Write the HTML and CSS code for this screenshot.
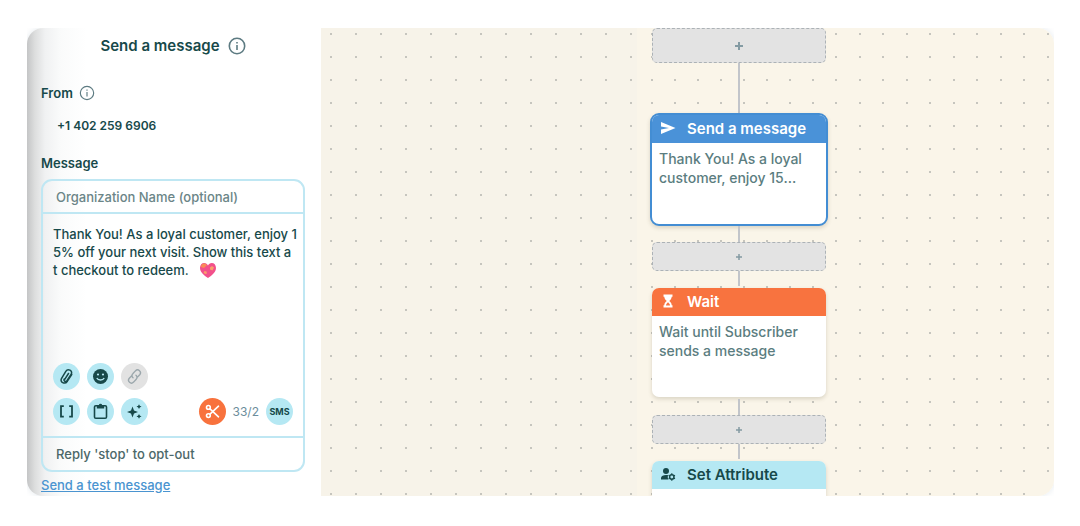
FILE: index.html
```html
<!DOCTYPE html>
<html lang="en">
<head>
  <meta charset="utf-8">
  <title>Send a message</title>
  <link rel="stylesheet" href="styles.css">
</head>
<body>
  <div class="builder">
    <!-- Message settings -->
    <form class="panel">
      <h1 class="panel-title">Send a message
        <svg class="info" width="18" height="18" viewBox="0 0 18 18"><circle cx="9" cy="9" r="7.7"/><path d="M9 8v5M9 5v1.6"/></svg>
      </h1>

      <label class="field-label" for="from">From
        <svg class="info light" width="16" height="16" viewBox="0 0 18 18"><circle cx="9" cy="9" r="7.5"/><path d="M9 8v5M9 5v1.6"/></svg>
      </label>
      <input class="from" type="text" id="from" value="+1 402 259 6906">

      <label class="field-label" for="message">Message</label>
      <div class="composer">
        <input class="org" type="text" placeholder="Organization Name (optional)" aria-label="Organization name">
        <div class="message-wrap">
          <textarea class="message" id="message" spellcheck="false">Thank You! As a loyal customer, enjoy 1
5% off your next visit. Show this text a
t checkout to redeem.</textarea>
          <svg class="heart" width="18" height="17" viewBox="0 0 18 17">
            <path fill="#f2508b" d="M9 16C5 13.4 1 10 1 5.900 1 3 2.900 1 5.200 1 7 1 8.300 2 9 3.500 9.700 2 11 1 12.800 1 15.100 1 17 3 17 5.900 17 10 13 13.400 9 16z"/>
            <path fill="#f98b57" d="M3.500 2c1.500-1 3.500-.5 4.500 1L5 6 2 5c0-1.500.5-2.400 1.500-3z"/>
            <path fill="#f9a06a" d="M11 5.500l2-1.500 2 1.500-1.500 3-2.500-1zM5.500 9l2 .5.5 2-2 .5-1.500-1.500z"/>
          </svg>
        </div>
        <div class="tools">
          <div class="tool-row">
            <button type="button" class="tool" aria-label="Attach file">
              <svg width="17" height="17" viewBox="0 0 17 17" fill="none" stroke="#17494a" stroke-width="1.500" stroke-linecap="round"><path d="M10.500 5.500L6.700 11.300M13.700 6.500l-4.300 6.700c-2.600 3.700-8 1-5.800-2.900L7.800 3.300c1.900-3.100 7.300-1 5.400 2.900l-4.100 6.300c-1.300 1.900-4 .5-2.900-1.500"/></svg>
            </button>
            <button type="button" class="tool" aria-label="Insert emoji">
              <svg width="17" height="17" viewBox="0 0 17 17"><circle cx="8.500" cy="8.500" r="7.500" fill="#17494a"/><circle cx="6" cy="6.500" r="1.100" fill="#b5e8f3"/><circle cx="11" cy="6.500" r="1.100" fill="#b5e8f3"/><path d="M4.800 10c1.400 2.700 6 2.700 7.400 0" fill="none" stroke="#b5e8f3" stroke-width="1.400"/></svg>
            </button>
            <button type="button" class="tool off" aria-label="Insert link" disabled>
              <svg width="17" height="17" viewBox="0 0 17 17" fill="none" stroke="#9ba7ac" stroke-width="1.400" stroke-linecap="round"><path d="M7 9.800c-1.500-1.200-1.300-3 0-4.300l2.400-2.600c2.700-2.700 6.700.8 4.300 3.800l-2 2.200M10 7.200c1.500 1.200 1.300 3 0 4.300l-2.400 2.600c-2.700 2.700-6.700-.8-4.300-3.800l2-2.200"/></svg>
            </button>
          </div>
          <div class="tool-row">
            <button type="button" class="tool" aria-label="Insert field">
              <svg width="17" height="17" viewBox="0 0 17 17" fill="none" stroke="#17494a" stroke-width="1.800"><path d="M5.800 3.200H3v10.400h2.800M11.200 3.200H14v10.400h-2.800"/></svg>
            </button>
            <button type="button" class="tool" aria-label="Templates">
              <svg width="17" height="17" viewBox="0 0 17 17"><rect x="2.500" y="2.700" width="12" height="12.500" rx="1.300" fill="none" stroke="#17494a" stroke-width="1.600"/><path fill="#17494a" d="M4.800 2h2a1.800 1.800 0 0 1 3.400 0h2v3.500H4.800z"/></svg>
            </button>
            <button type="button" class="tool" aria-label="Generate text">
              <svg width="17" height="17" viewBox="0 0 17 17" fill="#17494a"><path d="M6.500 3.500L8 7.400l4 1.500-4 1.500-1.500 4L5 10.400 1 8.900l4-1.500zM13 1.200l.8 1.600 1.700.8-1.700.8L13 6l-.8-1.600-1.700-.8 1.700-.8zM13 11l.8 1.600 1.700.8-1.700.8-.8 1.600-.8-1.600-1.700-.8 1.700-.8z"/></svg>
            </button>
            <button type="button" class="tool shorten" aria-label="Shorten">
              <svg width="17" height="17" viewBox="0 0 17 17" fill="none" stroke="#fff" stroke-width="1.600" stroke-linecap="round"><circle cx="4.400" cy="4.400" r="1.900"/><circle cx="4.400" cy="12.600" r="1.900"/><path d="M6 5.800l8.500 8M6 11.200l8.500-8"/></svg>
            </button>
            <span class="count">33/2</span>
            <button type="button" class="tool sms">SMS</button>
          </div>
        </div>
        <div class="opt-out">Reply 'stop' to opt-out</div>
      </div>
      <a class="test-link" href="#">Send a test message</a>
    </form>

    <!-- Automation flow -->
    <div class="canvas">
      <div class="grid-left"></div>
      <div class="flow">
        <button class="add tall" aria-label="Add step"><svg width="8" height="8" viewBox="0 0 8 8"><path d="M4 0v8M0 4h8"/></svg></button>
        <div class="line long"></div>
        <div class="node selected">
          <h2 class="node-head blue">
            <svg width="16" height="14" viewBox="0 0 16 14"><path fill="#fff" d="M1 1l14.500 6L1 13V8.600L9 7 1 5.400z"/></svg>
            Send a message
          </h2>
          <p class="node-body">Thank You! As a loyal customer, enjoy 15...</p>
        </div>
        <div class="line"></div>
        <button class="add" aria-label="Add step"><svg width="6" height="6" viewBox="0 0 8 8"><path d="M4 0v8M0 4h8"/></svg></button>
        <div class="line gap-below"></div>
        <div class="node">
          <h2 class="node-head orange">
            <svg width="16" height="14" viewBox="0 0 16 14"><path fill="#fff" fill-rule="evenodd" d="M3.500.5h9v2.300h-.8c0 2-1.300 3.200-2.500 4.200 1.200 1 2.500 2.200 2.500 4.200h.8v2.300h-9v-2.300h.8C4.300 9.200 5.600 8 6.800 7 5.600 6 4.300 4.800 4.300 2.800h-.8zM6 11.500h4C10 10 9 9 8 8.200 7 9 6 10 6 11.500z"/></svg>
            Wait
          </h2>
          <p class="node-body">Wait until Subscriber sends a message</p>
        </div>
        <div class="line gap-above"></div>
        <button class="add" aria-label="Add step"><svg width="6" height="6" viewBox="0 0 8 8"><path d="M4 0v8M0 4h8"/></svg></button>
        <div class="line gap-below"></div>
        <div class="node last">
          <h2 class="node-head cyan">
            <svg width="16" height="14" viewBox="0 0 16 14"><g fill="#17494a"><circle cx="6" cy="4" r="3"/><path d="M1 12.500V11c0-2 2.500-3 5-3 .8 0 1.500.1 2.200.3-.7 1.300-.6 2.900.3 4.200z"/></g><circle cx="11.800" cy="10" r="2.200" fill="none" stroke="#17494a" stroke-width="1.500"/><path stroke="#17494a" stroke-width="1.200" d="M11.800 6.300v1.200M11.800 12.500v1.200M8.600 8.200l1 .5M14 11.300l1 .5M15 8.200l-1 .5M9.600 11.300l-1 .5"/></svg>
            Set Attribute
          </h2>
        </div>
      </div>
      <div class="grid-right"></div>
    </div>
  </div>
</body>
</html>
```
FILE: styles.css
```css
body {
  margin: 28px 26px 30px 27px;
  background: #fff;
  color: #17494a;
  font-family: Inter, "Liberation Sans", sans-serif;
}
h1, h2, p {
  margin: 0;
}
button {
  padding: 0;
  border: none;
  font-family: inherit;
  cursor: pointer;
}
input, textarea {
  display: block;
  box-sizing: border-box;
  width: 100%;
  border: none;
  outline: none;
  background: none;
  color: inherit;
  font-family: inherit;
}
.builder {
  display: flex;
  border-radius: 16px;
  overflow: hidden;
  box-shadow: 0 0 6px rgba(120, 150, 170, 0.2);
}

/* Panel */
.panel {
  box-sizing: border-box;
  flex: 0 0 294px;
  padding: 8px 16px 0 14px;
  background: linear-gradient(to right, #c4c5c6, #dddede 8px, #f0f1f2 18px, #fafbfb 34px, #fff 60px);
}
.panel-title {
  display: flex;
  align-items: center;
  justify-content: center;
  gap: 8px;
  height: 20px;
  margin-bottom: 28px;
  font-size: 15px;
  font-weight: 600;
  line-height: 18px;
}
.info {
  fill: none;
  stroke: #5d7b82;
  stroke-width: 1.6;
}
.info.light {
  stroke-width: 1.3;
}
.field-label {
  display: flex;
  align-items: center;
  gap: 6px;
  height: 18px;
  font-size: 13px;
  font-weight: 600;
}
.from {
  height: 18px;
  margin: 14px 0 20px;
  padding: 0 16px;
  font-size: 12px;
  font-weight: 600;
}
.composer {
  margin-top: 7px;
  border: 2px solid #bfe7f3;
  border-radius: 11px;
}
.org {
  height: 33px;
  padding: 0 13px;
  border-bottom: 2px solid #bfe7f3;
  font-size: 13px;
  font-weight: 500;
}
.org::placeholder {
  color: #6b8587;
  opacity: 1;
}
.message-wrap {
  position: relative;
}
.message {
  height: 149px;
  padding: 11px 0 0 10px;
  resize: none;
  overflow: hidden;
  white-space: pre;
  font-size: 13px;
  font-weight: 500;
  line-height: 18px;
}
.heart {
  position: absolute;
  left: 156px;
  top: 48px;
}
.tools {
  display: grid;
  gap: 8px;
  padding: 0 10px 11px;
}
.tool-row {
  display: flex;
  align-items: center;
  gap: 7px;
}
.tool {
  display: flex;
  align-items: center;
  justify-content: center;
  width: 27px;
  height: 27px;
  border-radius: 50%;
  background: #b5e8f3;
  color: #17494a;
}
.tool.off {
  background: #e2e2e2;
}
.tool.shorten {
  margin-left: auto;
  background: #f8723d;
}
.tool.sms {
  font-size: 9px;
  font-weight: 700;
}
.count {
  color: #6c8d9b;
  font-size: 12px;
}
.opt-out {
  padding: 0 13px;
  border-top: 2px solid #bfe7f3;
  color: #4c6869;
  font-size: 13px;
  font-weight: 500;
  line-height: 32px;
}
.test-link {
  display: block;
  margin-top: 4px;
  color: #4a94d0;
  font-size: 13px;
  font-weight: 500;
  line-height: 19px;
}

/* Canvas */
.canvas {
  display: flex;
  flex: 1;
  background: #faf5e9;
}
.grid-left {
  flex: 1;
  background: radial-gradient(circle at 12px 11px, #c6c5be 1px, transparent 1px) -2px -5px / 25px 23px, #f7f3e9;
}
.flow {
  display: flex;
  flex-direction: column;
  align-items: center;
  flex: 0 0 204px;
  background: radial-gradient(circle at 11px 11px, #c6c5be 1px, transparent 1px) 4px -5px / 23px 23px;
}
.grid-right {
  flex: 0 0 213px;
  background: radial-gradient(circle at 12px 11px, #c6c5be 1px, transparent 1px) 7px -5px / 47px 23px, radial-gradient(circle at 35px 11px, #c6c5be 1px, transparent 1px) 7px -5px / 47px 23px;
}
.add {
  display: flex;
  align-items: center;
  justify-content: center;
  box-sizing: border-box;
  width: 174px;
  height: 29px;
  border: 1px dashed #acb2b6;
  border-radius: 5px;
  background: #e3e3e3;
}
.add.tall {
  height: 35px;
}
.add path {
  fill: none;
  stroke: #849ba3;
  stroke-width: 2;
}
.line {
  width: 2px;
  height: 16px;
  background: #c2c5ca;
}
.line.long {
  height: 50px;
}
.line.gap-below {
  height: 15px;
  margin-bottom: 2px;
}
.line.gap-above {
  margin-top: 2px;
}
.node {
  box-sizing: border-box;
  width: 174px;
  height: 109px;
  border-radius: 7px;
  overflow: hidden;
  background: #fff;
  box-shadow: 0 2px 4px rgba(90, 80, 50, 0.2);
}
.node.selected {
  width: 178px;
  height: 113px;
  border: 2px solid #438dd3;
  border-radius: 9px;
}
.node.last {
  height: 35px;
  border-radius: 7px 7px 0 0;
}
.node-head {
  display: flex;
  align-items: center;
  gap: 11px;
  box-sizing: border-box;
  height: 28px;
  padding: 0 0 2px 8px;
  font-size: 15px;
  font-weight: 600;
}
.blue {
  background: #4a92d8;
  color: #fff;
}
.orange {
  background: #f8733f;
  color: #fff;
}
.cyan {
  background: #b5e8f3;
}
.node-body {
  padding: 6px 7px;
  color: #5b7d80;
  font-size: 14px;
  font-weight: 500;
  line-height: 19px;
}
```
